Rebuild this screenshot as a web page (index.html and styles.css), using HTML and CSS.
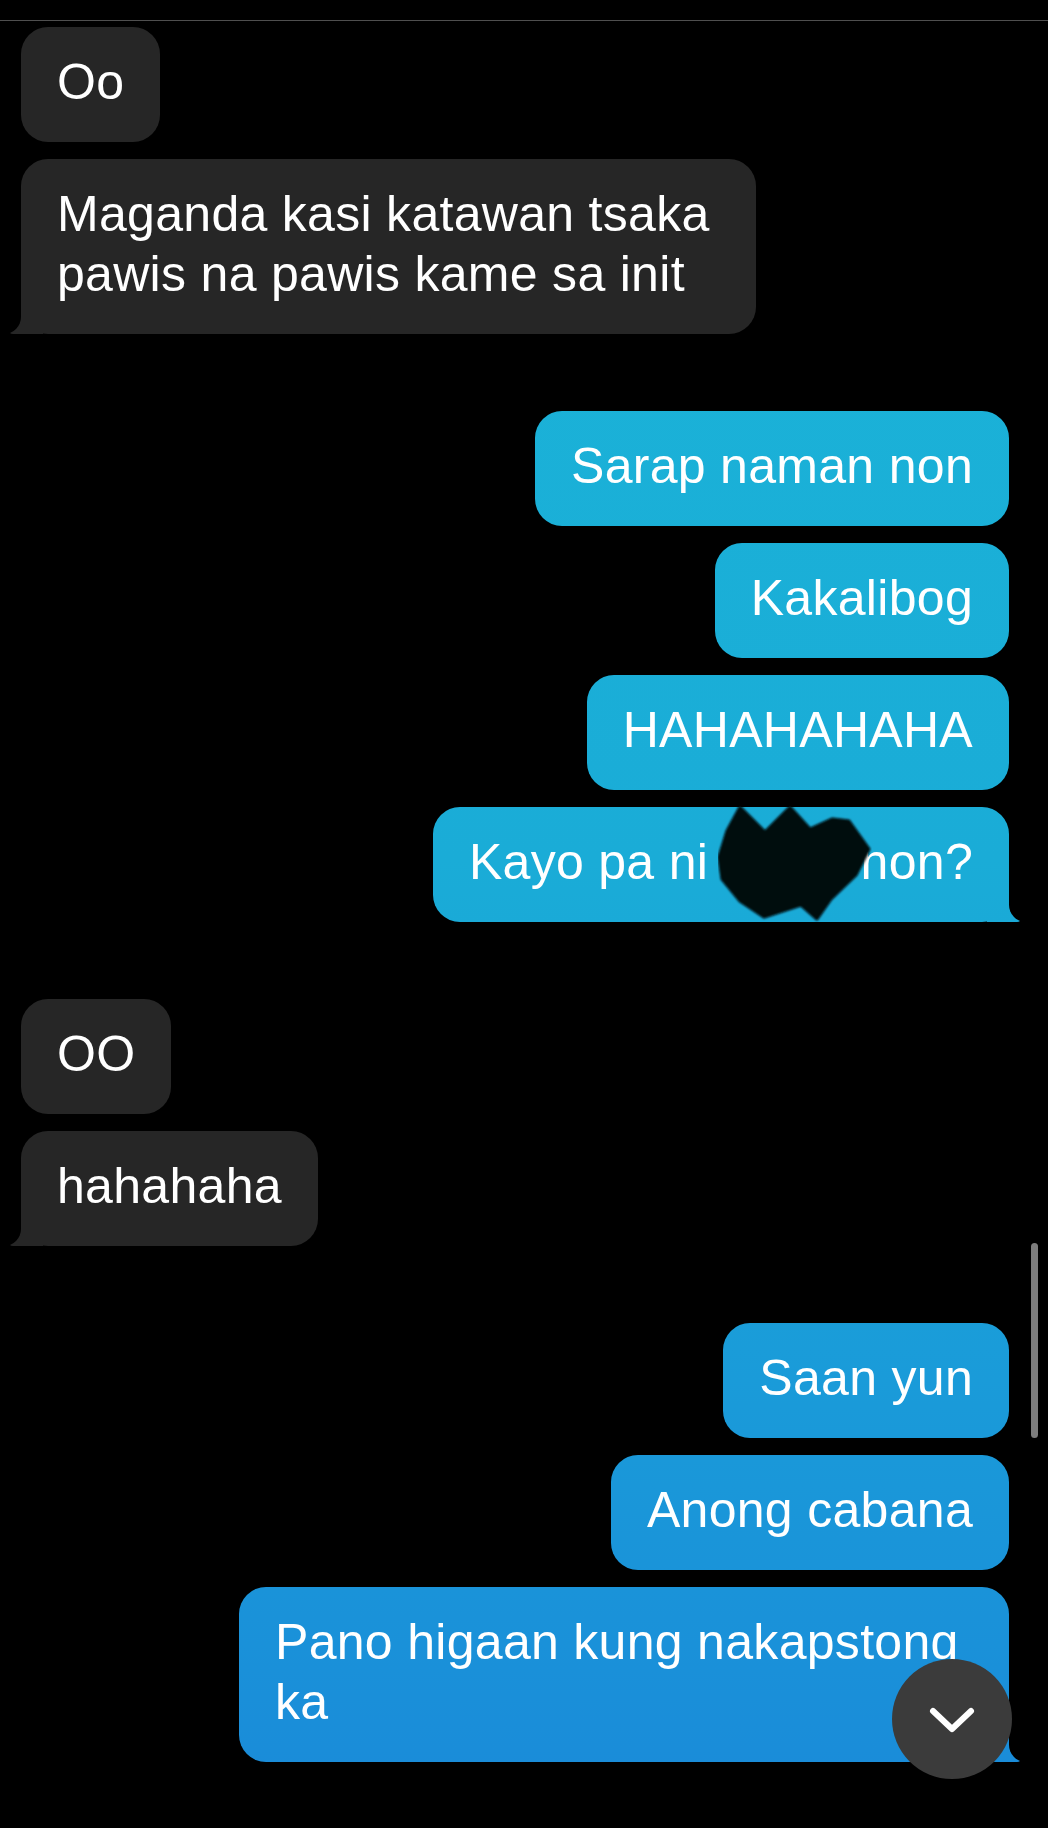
FILE: index.html
```html
<!DOCTYPE html>
<html lang="en">
	<head>
		<meta charset="utf-8">
		<meta name="viewport" content="width=device-width, initial-scale=1.0">
		<title>Messages</title>
		<link rel="stylesheet" href="styles.css">
	</head>
	<body>
		<div class="screen">
			<div class="topbar"></div>
			<main class="thread">
				<div class="group">
					<div class="bubble in">Oo</div>
					<div class="bubble in tail">Maganda kasi katawan tsaka pawis na pawis kame sa init</div>
				</div>
				<div class="group">
					<div class="bubble out">Sarap naman non</div>
					<div class="bubble out">Kakalibog</div>
					<div class="bubble out">HAHAHAHAHA</div>
					<div class="bubble out tail">Kayo pa ni <span class="redacted"><svg class="scribble" viewBox="0 0 154 117" width="154" height="117"><defs><filter id="fuzz"><feGaussianBlur stdDeviation="1.2"/></filter></defs><polygon filter="url(#fuzz)" fill="#03080a" stroke="#03080a" stroke-width="3" stroke-linejoin="round" points="22,2 47,27 72,2 92,24 114,14 131,16 151,44 138,70 113,94 99,114 83,100 46,112 22,96 4,74 1,52 9,26"/></svg></span> non?</div>
				</div>
				<div class="group">
					<div class="bubble in">OO</div>
					<div class="bubble in tail">hahahaha</div>
				</div>
				<div class="group">
					<div class="bubble out">Saan yun</div>
					<div class="bubble out">Anong cabana</div>
					<div class="bubble out tail">Pano higaan kung nakapstong ka</div>
				</div>
			</main>
			<div class="scrollbar"></div>
			<button class="jump" aria-label="Scroll to latest">
				<svg viewBox="0 0 120 120" width="120" height="120"><polyline points="41,52 60,70 79,52" fill="none" stroke="#fff" stroke-width="6" stroke-linecap="round" stroke-linejoin="round"/></svg>
			</button>
		</div>
	</body>
</html>
```
FILE: styles.css
```css
body {
	margin: 0;
	background-color: #000;
	font-family: "Liberation Sans", Arial, sans-serif;
	color: #fff;
}
.screen {
	position: relative;
	height: 1828px;
	overflow: hidden;
}
.topbar {
	height: 20px;
	border-bottom: 1px solid #4f4f4f;
}
.thread {
	display: flex;
	flex-direction: column;
	gap: 77px;
	padding: 6px 39px 0 21px;
}
.group {
	display: flex;
	flex-direction: column;
	gap: 17px;
}
.bubble {
	position: relative;
	max-width: 770px;
	box-sizing: border-box;
	padding: 25px 36px 30px;
	border-radius: 27px;
	font-size: 50px;
	line-height: 60px;
	letter-spacing: 0.3px;
}
.in {
	align-self: flex-start;
	max-width: 735px;
	background-color: #262626;
}
.out {
	align-self: flex-end;
	background: linear-gradient(to bottom, #1bb5d8 0px, #1aacd7 860px, #1a9bd9 1380px, #1a8ad9 1828px) fixed;
}
.tail::before,
.tail::after {
	content: "";
	position: absolute;
	bottom: 0;
	height: 32px;
}
.out.tail::before {
	right: -12px;
	width: 34px;
	background: inherit;
	border-bottom-right-radius: 4px;
}
.out.tail::after {
	right: -18px;
	width: 18px;
	background-color: #000;
	border-bottom-left-radius: 17px;
}
.in.tail::before {
	left: -12px;
	width: 34px;
	background: inherit;
	border-bottom-left-radius: 4px;
}
.in.tail::after {
	left: -18px;
	width: 18px;
	background-color: #000;
	border-bottom-right-radius: 17px;
}
.redacted {
	position: relative;
	display: inline-block;
	width: 124px;
	height: 60px;
	vertical-align: top;
}
.scribble {
	position: absolute;
	left: -4px;
	top: -27px;
}
.scrollbar {
	position: absolute;
	top: 1243px;
	right: 10px;
	width: 7px;
	height: 195px;
	border-radius: 4px;
	background-color: #7d7d7d;
}
.jump {
	position: absolute;
	left: 892px;
	top: 1659px;
	width: 120px;
	height: 120px;
	padding: 0;
	border: none;
	border-radius: 50%;
	background-color: #3b3b3b;
	cursor: pointer;
}
.jump svg {
	display: block;
}
```
